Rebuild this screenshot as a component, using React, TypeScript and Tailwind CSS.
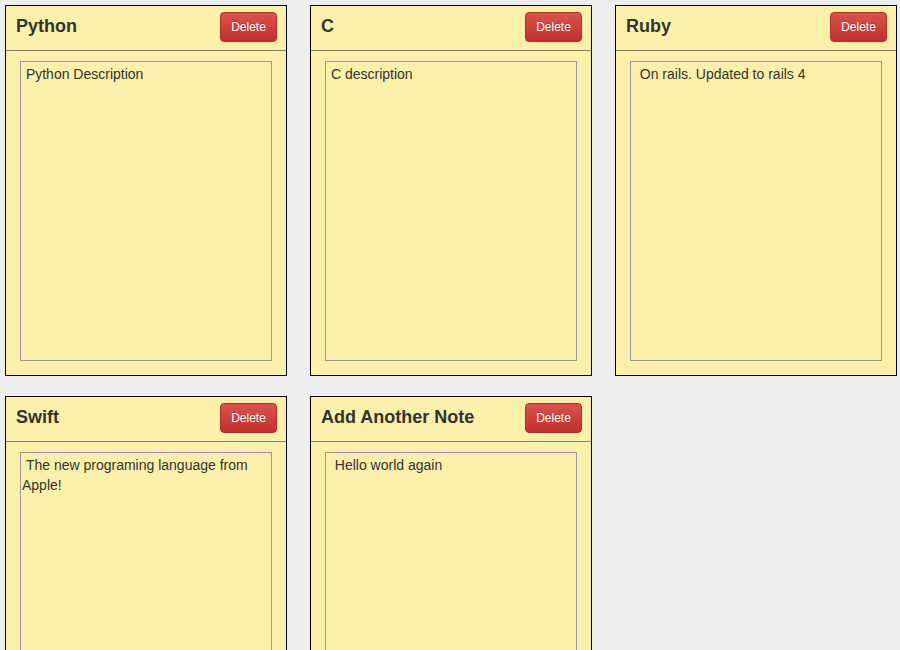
const notes = [
  { title: "Python", body: " Python Description" },
  { title: "C", body: " C description" },
  { title: "Ruby", body: "  On rails. Updated to rails 4" },
  { title: "Swift", body: " The new programing language from Apple!" },
  { title: "Add Another Note", body: "  Hello world again" },
];

function Note({ title, body }: { title: string; body: string }) {
  return (
    <div className="w-[282px] h-[371px] border border-black bg-[#fbf0aa] flex flex-col">
      <div className="h-[45px] shrink-0 flex items-center justify-between pl-[10px] pr-[9px] pb-[3px] border-b border-[#7f7f7f]">
        <h2 className="text-[18px] font-bold text-[#333]">{title}</h2>
        <button className="h-[30px] w-[57px] rounded-[4px] border border-[#b52b27] bg-gradient-to-b from-[#d9534f] to-[#c12e2a] text-[12px] text-white [text-shadow:0_-1px_0_rgba(0,0,0,0.2)]">
          Delete
        </button>
      </div>
      <textarea
        readOnly
        defaultValue={body}
        className="ml-[14px] mt-[10px] w-[252px] h-[300px] border border-[#999] bg-transparent px-[1px] pt-[2px] text-[14px] leading-[20px] text-[#333] resize-none outline-none whitespace-pre-wrap"
      />
    </div>
  );
}

export default function App() {
  return (
    <div
      className="min-h-[650px] bg-[#eeeeee] pl-[5px] pt-[5px]"
      style={{ fontFamily: '"Liberation Sans", Arial, sans-serif' }}
    >
      <div className="grid grid-cols-[282px_282px_282px] gap-x-[23px] gap-y-[20px]">
        {notes.map((n) => (
          <Note key={n.title} title={n.title} body={n.body} />
        ))}
      </div>
    </div>
  );
}
